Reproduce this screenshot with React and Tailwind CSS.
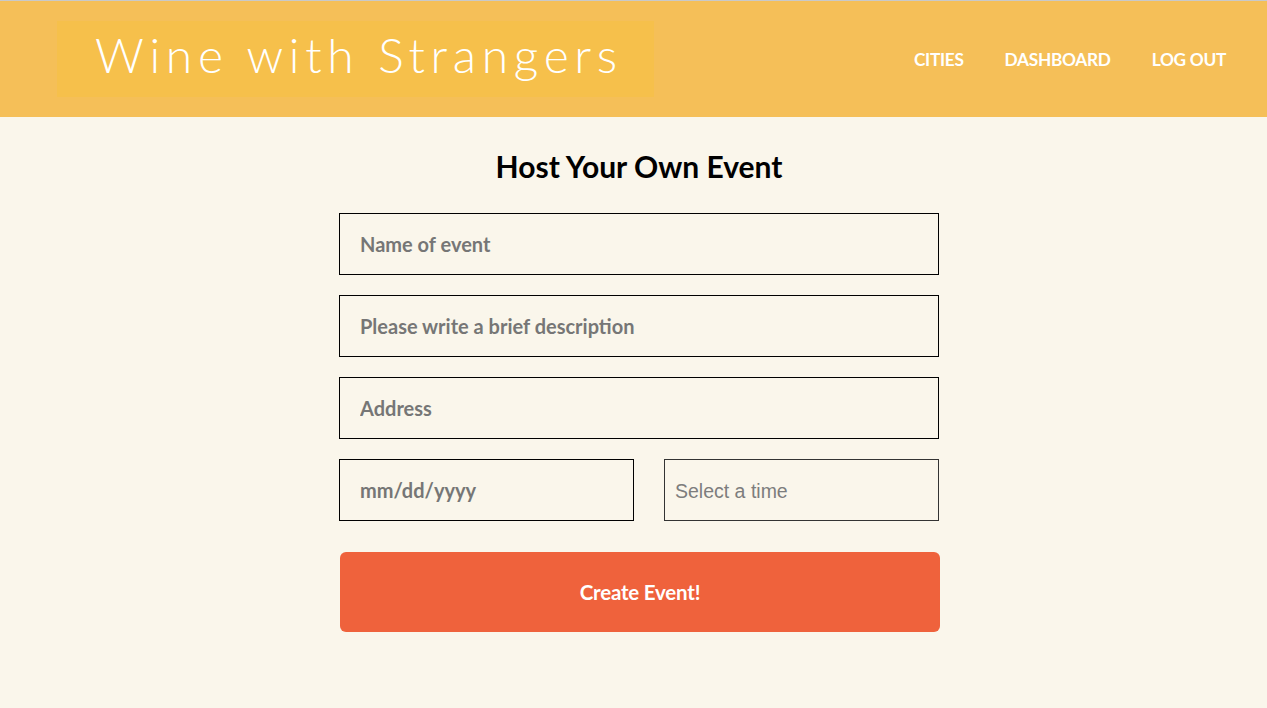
import React from "react";

const NavLink = ({ children }) => (
  <a href="#" className="font-['Lato'] font-bold text-[17.3px] text-white tracking-[-0.3px]">
    {children}
  </a>
);

const Field = ({ placeholder, className = "", ...rest }) => (
  <input
    type="text"
    placeholder={placeholder}
    className={`h-[62px] border border-black bg-transparent px-[20px] font-['Lato'] font-bold text-[20px] text-black placeholder:text-[#767676] outline-none ${className}`}
    {...rest}
  />
);

const App = () => {
  return (
    <div className="min-h-[708px] bg-[#faf6eb]">
      <header className="h-[117px] bg-[#f5bf58] border-t border-[#c9c9c9] flex items-center justify-between pl-[57px] pr-[41px]">
        <div className="w-[597px] h-[76px] bg-[#f6c04b] flex items-center pl-[38px]">
          <h1 className="font-['Lato'] font-light text-[48px] leading-none text-white tracking-[5.7px] pb-[8px]">
            Wine with Strangers
          </h1>
        </div>
        <nav className="flex items-center gap-[41px] pt-[2px]">
          <NavLink>CITIES</NavLink>
          <NavLink>DASHBOARD</NavLink>
          <NavLink>LOG OUT</NavLink>
        </nav>
      </header>

      <main className="flex flex-col items-center pt-[32px] pl-[11px]">
        <h2 className="font-['Lato'] font-bold text-[30px] leading-[34px] text-black">
          Host Your Own Event
        </h2>
        <form className="w-[600px] mt-[30px] flex flex-col gap-[20px]">
          <Field placeholder="Name of event" className="w-full caret-black" autoFocus />
          <Field placeholder="Please write a brief description" className="w-full" />
          <Field placeholder="Address" className="w-full" />
          <div className="flex justify-between">
            <Field placeholder="mm/dd/yyyy" className="w-[295px] border-[#333]" />
            <input
              type="text"
              placeholder="Select a time"
              className="w-[275px] h-[62px] border border-[#333] bg-transparent px-[10px] pt-[2px] font-['Liberation_Sans'] text-[19.5px] placeholder:text-[#7d7d7d] outline-none"
            />
          </div>
          <button
            type="button"
            className="mt-[11px] ml-[1px] h-[80px] w-[600px] rounded-[6px] bg-[#ef623c] font-['Lato'] font-bold text-[20.5px] tracking-[-0.2px] text-white"
          >
            Create Event!
          </button>
        </form>
      </main>
    </div>
  );
};

export default App;
